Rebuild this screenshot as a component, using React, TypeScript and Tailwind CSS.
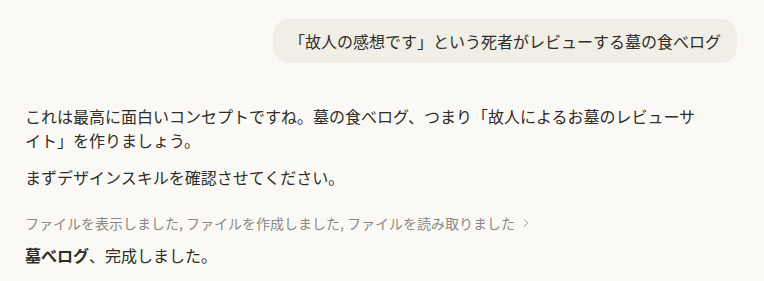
import { ChevronRight } from "lucide-react";

export default function App() {
  return (
    <div
      className="min-h-screen bg-[#faf9f5] text-[#2f2d28]"
      style={{ fontFamily: '"Noto Sans CJK JP", "Noto Sans", sans-serif' }}
    >
      <div className="px-[25px] pt-[19px]">
        {/* user message */}
        <div className="flex justify-end pr-[2px]">
          <div className="rounded-2xl bg-[#f0eee6] px-4 py-[10px] text-base leading-6">
            「故人の感想です」という死者がレビューする墓の食べログ
          </div>
        </div>

        {/* assistant reply */}
        <div className="mt-[41px] w-[680px] text-base leading-6">
          <p>
            これは最高に面白いコンセプトですね。墓の食べログ、つまり「故人によるお墓のレビューサイト」を作りましょう。
          </p>
          <p className="mt-[13px]">まずデザインスキルを確認させてください。</p>

          <button className="mt-[24px] flex items-center gap-1 text-sm leading-5 text-[#8a8983]">
            <span>ファイルを表示しました, ファイルを作成しました, ファイルを読み取りました</span>
            <ChevronRight className="h-3.5 w-3.5" strokeWidth={1.5} />
          </button>

          <p className="mt-[10px]">
            <span className="font-bold">墓べログ</span>、完成しました。
          </p>
        </div>
      </div>
    </div>
  );
}
